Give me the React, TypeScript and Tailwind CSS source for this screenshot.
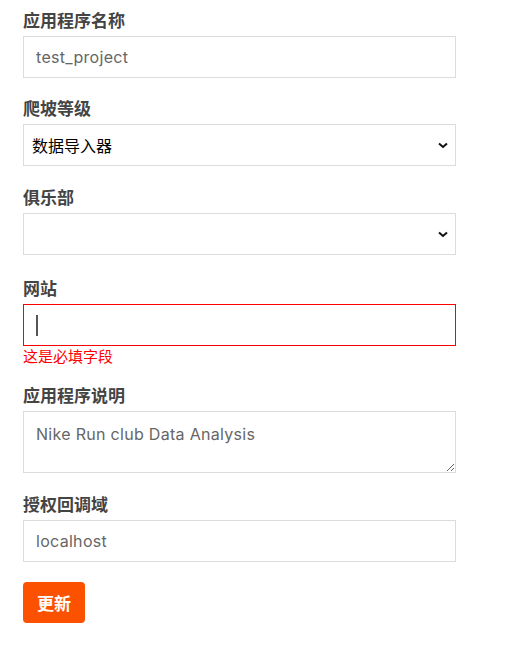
import React from "react";

const labelCls =
  "block text-[17px] leading-6 font-bold text-[#444] mb-1 [font-family:'Noto_Sans_CJK_SC','Liberation_Sans',sans-serif]";
const boxCls =
  "block w-[433px] h-[42px] border bg-white text-base outline-none";
const textFieldCls = `${boxCls} border-[#dcdce0] px-[12px] text-[#666] tracking-[0.3px] [font-family:'Inter','Noto_Sans_CJK_SC',sans-serif]`;
const selectCls = `${boxCls} border-[#dcdce0] appearance-none pl-[8px] pr-[24px] text-black [font-family:'Noto_Sans_CJK_SC',sans-serif]`;

function Chevron() {
  return (
    <svg
      className="pointer-events-none absolute right-[8px] top-[18px]"
      width="10"
      height="7"
      viewBox="0 0 10 7"
    >
      <path d="M1 1.5 L5 5 L9 1.5" fill="none" stroke="#111" strokeWidth="2" />
    </svg>
  );
}

export default function App() {
  return (
    <div className="bg-white min-h-[649px] w-[512px] pl-[23px] pt-[8px]">
      <form className="flex flex-col">
        <div className="mb-[18px]">
          <label className={labelCls}>应用程序名称</label>
          <input className={textFieldCls} defaultValue="test_project" />
        </div>

        <div className="mb-[19px]">
          <label className={labelCls}>爬坡等级</label>
          <div className="relative w-[433px]">
            <select className={selectCls} defaultValue="importer">
              <option value="importer">数据导入器</option>
            </select>
            <Chevron />
          </div>
        </div>

        <div className="mb-[21px]">
          <label className={labelCls}>俱乐部</label>
          <div className="relative w-[433px]">
            <select className={selectCls} defaultValue="">
              <option value=""></option>
            </select>
            <Chevron />
          </div>
        </div>

        <div className="mb-[18px]">
          <label className={labelCls}>网站</label>
          <div className="relative w-[433px]">
            <input
              className={`${boxCls} border-[#ff0000] px-[12px] text-[#666]`}
              defaultValue=""
            />
            <span className="absolute left-[13px] top-[11px] h-[21px] w-[2px] bg-[#555]" />
          </div>
          <p className="mt-[1px] text-[15px] leading-[18px] text-[#ff0000] [font-family:'Noto_Sans_CJK_SC',sans-serif]">
            这是必填字段
          </p>
        </div>

        <div className="mb-[19px]">
          <label className={labelCls}>应用程序说明</label>
          <textarea
            className={`${boxCls} border-[#dcdce0] min-h-[62px] px-[12px] pt-[12px] leading-[20px] text-[#666] tracking-[0.3px] [font-family:'Inter','Noto_Sans_CJK_SC',sans-serif]`}
            defaultValue="Nike Run club Data Analysis"
          />
        </div>

        <div className="mb-[20px]">
          <label className={labelCls}>授权回调域</label>
          <input className={textFieldCls} defaultValue="localhost" />
        </div>

        <div>
          <button
            type="button"
            className="h-[41px] w-[62px] rounded-[4px] bg-[#fc5200] text-[17px] font-bold text-white [font-family:'Noto_Sans_CJK_SC',sans-serif]"
          >
            更新
          </button>
        </div>
      </form>
    </div>
  );
}
